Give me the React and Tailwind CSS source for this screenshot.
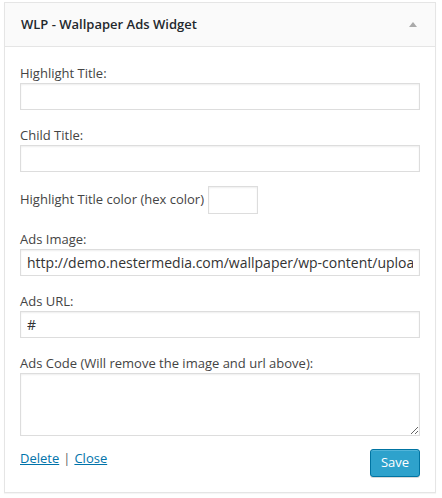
import React from "react";

const font = { fontFamily: '"Open Sans", "Liberation Sans", sans-serif' };

function Field({ label, value = "", mt = "mt-[16px]" }) {
  return (
    <div className={mt}>
      <label className="block text-[13px] leading-[18px] text-[#444]">{label}</label>
      <input
        readOnly
        value={value}
        className="mt-[1px] block w-full h-[27px] border border-[#ddd] bg-white px-[6px] text-[14px] text-[#333] outline-none shadow-[inset_0_1px_2px_rgba(0,0,0,0.07)]"
      />
    </div>
  );
}

export default function App() {
  return (
    <div className="bg-white w-[442px] h-[498px] pt-[2px] pl-[4px]" style={font}>
      <div className="w-[432px] h-[491px] border border-[#e5e5e5] bg-white shadow-[0_1px_1px_rgba(0,0,0,0.04)]">
        <div className="h-[44px] bg-[#fafafa] border-b border-[#e5e5e5] flex items-center pl-[16px] pr-[18px]">
          <h3 className="text-[13px] font-semibold text-[#23282d]">WLP - Wallpaper Ads Widget</h3>
          <span className="ml-auto w-0 h-0 border-l-[4px] border-r-[4px] border-b-[5px] border-l-transparent border-r-transparent border-b-[#aaa]" />
        </div>

        <div className="px-[15px]">
          <Field label="Highlight Title:" mt="mt-[17px]" />
          <Field label="Child Title:" />

          <div className="mt-[14px] flex items-center">
            <span className="text-[13px] text-[#444]">Highlight Title color (hex color)</span>
            <input
              readOnly
              className="ml-[4px] w-[50px] h-[28px] border border-[#ddd] bg-white outline-none shadow-[inset_0_1px_2px_rgba(0,0,0,0.07)]"
            />
          </div>

          <Field label="Ads Image:" value="http://demo.nestermedia.com/wallpaper/wp-content/uploads/2015/ad.jpg" />
          <Field label="Ads URL:" value="#" />

          <div className="mt-[16px]">
            <label className="block text-[13px] leading-[18px] text-[#444]">Ads Code (Will remove the image and url above):</label>
            <textarea
              readOnly
              className="mt-[1px] block w-full h-[63px] border border-[#ddd] bg-white outline-none resize-y shadow-[inset_0_1px_2px_rgba(0,0,0,0.07)]"
            />
          </div>

          <div className="mt-[13px] flex items-start justify-between">
            <div className="text-[13px] leading-[18px] text-[#444]">
              <a href="#" className="text-[#0073aa] underline">Delete</a>
              <span className="mx-[4px] text-[#666]">|</span>
              <a href="#" className="text-[#0073aa] underline">Close</a>
            </div>
            <button className="h-[28px] w-[50px] rounded-[3px] bg-[#2ea2cc] border border-[#0074a2] text-white text-[13px] shadow-[inset_0_1px_0_rgba(120,200,230,0.5),0_1px_0_rgba(0,0,0,0.15)]">
              Save
            </button>
          </div>
        </div>
      </div>
    </div>
  );
}
